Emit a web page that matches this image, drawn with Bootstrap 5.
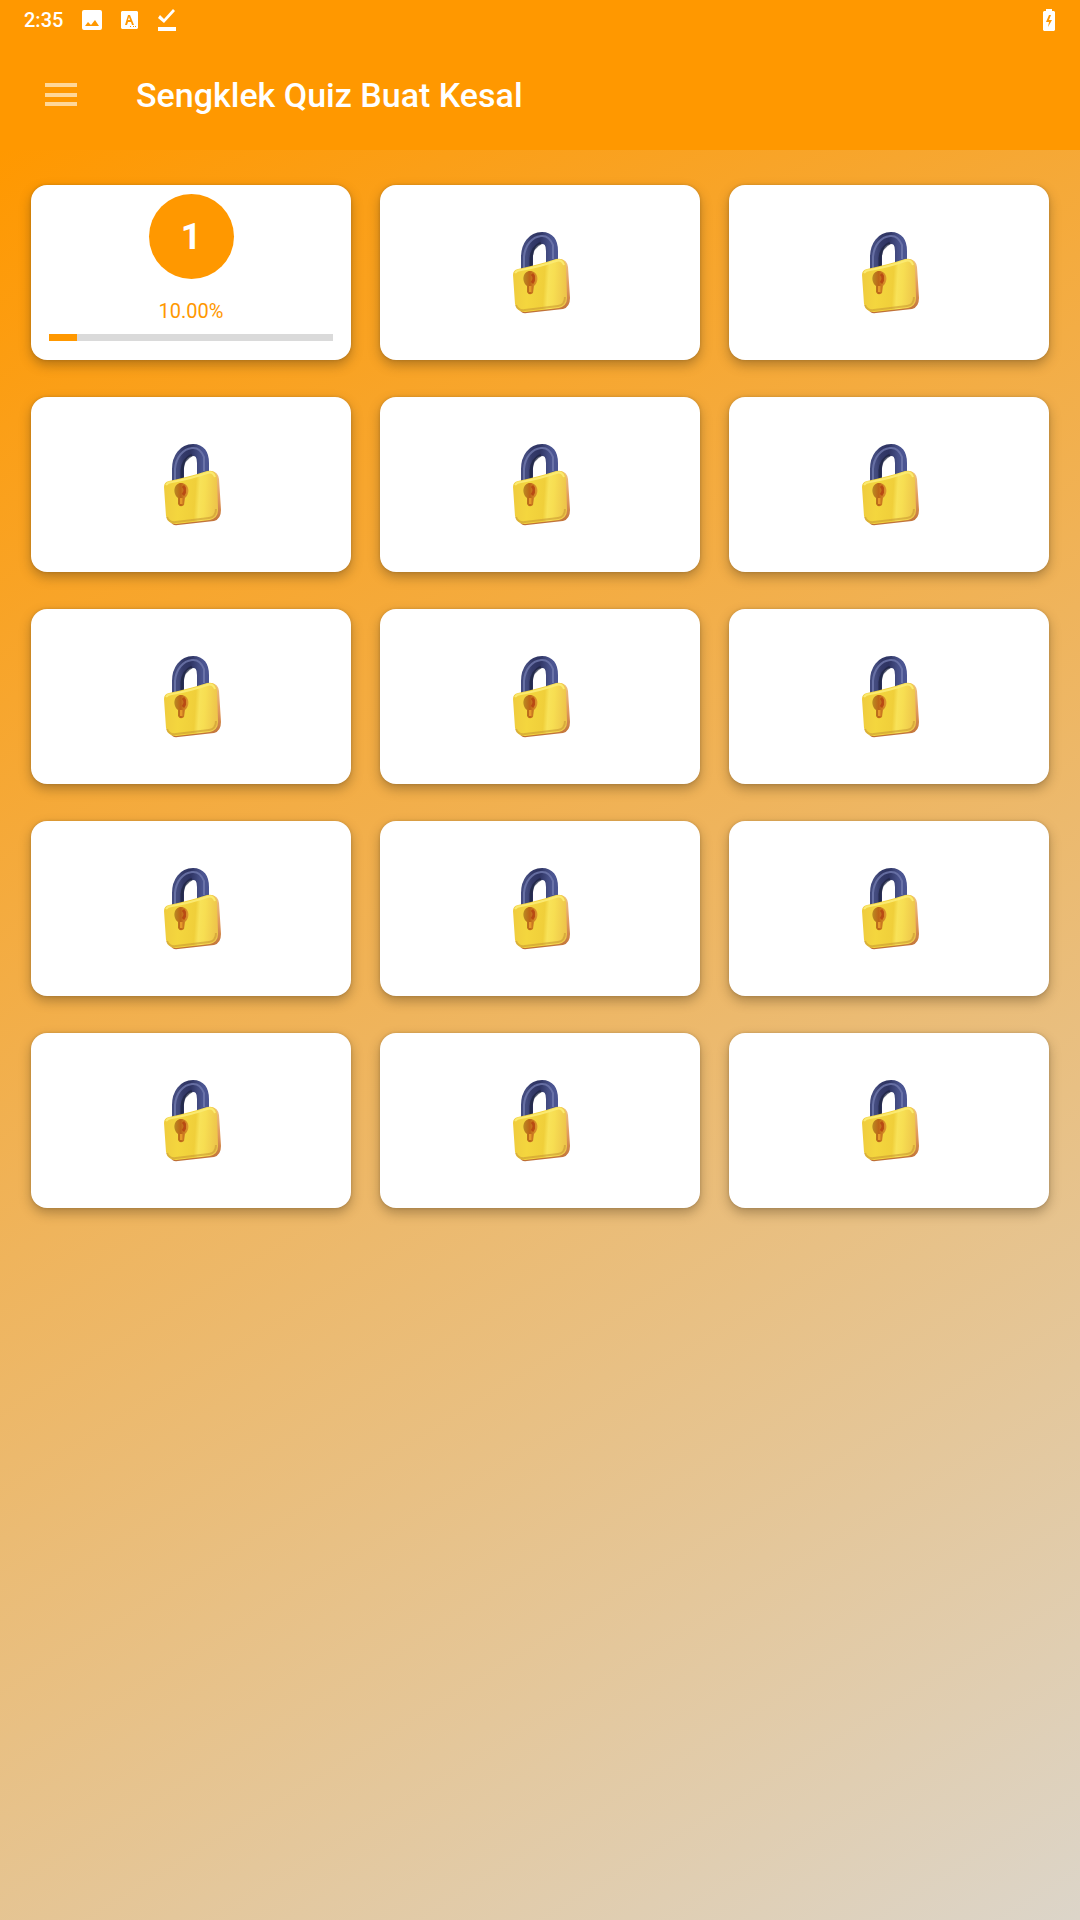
<!DOCTYPE html>
<html lang="id">
<head>
<meta charset="utf-8">
<meta name="viewport" content="width=device-width, initial-scale=1">
<title>Sengklek Quiz Buat Kesal</title>
<link href="https://cdn.jsdelivr.net/npm/bootstrap@5.3.0/dist/css/bootstrap.min.css" rel="stylesheet">
<style>
  :root { --quiz-orange: #ff9800; }
  body { font-family: Roboto, "Liberation Sans", sans-serif; background: var(--quiz-orange); }
  .status-bar { height: 40px; padding: 0 25px 0 24px; font-size: 20px; line-height: 24px; font-weight: 500; }
  .status-bar svg, .menu-btn svg, .lock-art { display: block; }
  .status-icons { margin-left: 19px; gap: 19px; }
  .app-bar { height: 110px; padding: 0 45px; gap: 59px; }
  .app-title { font-size: 34px; line-height: 40px; font-weight: 500; }
  .menu-btn { line-height: 0; }
  .level-area { background: linear-gradient(148.6deg, #ff9800, #dcd5c9); padding: 35px 31px; }
  .level-grid { display: grid; grid-template-columns: repeat(3, minmax(0, 1fr)); column-gap: 29px; row-gap: 37px; }
  .level-card { height: 175px; border-radius: 16px; background: #fff; box-shadow: 0 5px 12px rgba(60, 45, 20, .36), 0 0 3px rgba(60, 45, 20, .2); }
  .level-open { padding: 9px 18px 19px; }
  .level-number { width: 85px; height: 85px; background: var(--quiz-orange); font-size: 36px; line-height: 40px; font-weight: 700; }
  .level-percent { color: var(--quiz-orange); font-size: 20px; line-height: 24px; margin-top: 20px; }
  .level-progress { height: 7px; background: #dadada; border-radius: 0; }
  .level-progress .progress-bar { background: var(--quiz-orange); }
</style>
<script src="https://cdn.jsdelivr.net/npm/bootstrap@5.3.0/dist/js/bootstrap.bundle.min.js" defer></script>
</head>
<body class="min-vh-100 d-flex flex-column">
<svg width="0" height="0" class="position-absolute" aria-hidden="true">
  <defs>
    <linearGradient id="shackleTone" x1="0" x2="1"><stop offset="0" stop-color="#434b7e"/><stop offset=".2" stop-color="#343a69"/><stop offset=".5" stop-color="#2e3463"/><stop offset=".85" stop-color="#454e85"/><stop offset="1" stop-color="#4b5592"/></linearGradient>
    <linearGradient id="faceTone" x1="0" x2="1" y1="0" y2=".06"><stop offset="0" stop-color="#efcb3e"/><stop offset=".3" stop-color="#f4d63e"/><stop offset=".6" stop-color="#f0cf3a"/><stop offset=".68" stop-color="#f8e258"/><stop offset=".78" stop-color="#f7de52"/><stop offset="1" stop-color="#eec64a"/></linearGradient>
    <linearGradient id="sideTone" x1="0" x2="0" y1="0" y2="1"><stop offset="0" stop-color="#eec387"/><stop offset=".5" stop-color="#e2995c"/><stop offset="1" stop-color="#bd6f35"/></linearGradient>
    <linearGradient id="holeTone" x1="0" x2="1"><stop offset="0" stop-color="#b98a22"/><stop offset=".45" stop-color="#bd6417"/><stop offset="1" stop-color="#e09b30"/></linearGradient>
    <filter id="soft" x="-20%" y="-20%" width="140%" height="140%"><feGaussianBlur stdDeviation=".7"/></filter>
    <symbol id="lock" viewBox="-4 0 64 82">
      <path d="M15 38V25C15 14 21 6 30 6Q40 6 40 19V32" fill="none" stroke="url(#shackleTone)" stroke-width="12"/>
      <g filter="url(#soft)" fill="none">
        <path d="M12 36V25C13 13 20 5 29 4Q37 3 41 13V27" stroke="#7079ae" stroke-width="2" opacity=".8"/>
        <path d="M19 36V26Q20 15 29 11" stroke="#20223f" stroke-width="3" opacity=".7"/>
      </g>
      <path d="M9 39L49 27Q55 28 56 35L58 66Q58 75 51 77L15 81Q9 82 7 77Z" fill="url(#sideTone)"/>
      <path d="M6 37Q29 32 44 27Q53 25 54 34L55 66Q55 74 47 76L13 80Q5 80 3 72L1 43Q1 38 6 37Z" fill="url(#faceTone)"/>
      <g filter="url(#soft)" fill="none">
        <path d="M3 41Q5 38 9 38Q30 34 44 29Q50 27 52 33" stroke="#fbea70" stroke-width="2"/>
        <path d="M4 73Q6 79 13 78L46 74Q53 73 53 65" stroke="#c99a32" stroke-width="2" opacity=".6"/>
      </g>
      <path d="M18 39C11 39 9 49 15 54L15 60Q17 64 21 61L22 54C28 49 26 39 18 39Z" fill="url(#holeTone)"/>
      <g filter="url(#soft)" fill="none">
        <path d="M20 42Q24 46 20 51" stroke="#b4400f" stroke-width="3" opacity=".8"/>
        <path d="M18 54V60" stroke="#e69a2a" stroke-width="3"/>
      </g>
    </symbol>
  </defs>
</svg>
<div class="status-bar d-flex align-items-center text-white">
  <span>2:35</span>
  <div class="status-icons d-flex align-items-center">
    <svg width="20" height="20" viewBox="0 0 20 20"><path fill="#fff" fill-rule="evenodd" d="M2 0H18Q20 0 20 2V18Q20 20 18 20H2Q0 20 0 18V2Q0 0 2 0ZM3 16H17L13 10 9 15 6 12Z"/></svg>
    <svg width="17" height="18" viewBox="0 0 17 18"><path fill="#fff" fill-rule="evenodd" d="M1 0H16L17 1V17L16 18H1L0 17V1ZM4 14H6L7 11H10L11 14H13L9 4H7ZM7 9L8 6 9 9ZM9 15V16H10V15ZM12 15V16H13V15ZM14 15V16H15V15Z"/></svg>
    <svg width="20" height="22" viewBox="0 0 20 22"><path fill="#fff" d="M1 18H19V22H1ZM1 9L3 6 7 10 16 0 18 2 7 14Z"/></svg>
  </div>
  <svg class="ms-auto" width="12" height="22" viewBox="0 0 12 22"><path fill="#fff" fill-rule="evenodd" d="M3 0H9V2H11L12 3V21L11 22H1L0 21V3L1 2H3ZM6 6L3 13H6L5 18 9 11H6L8 6Z"/></svg>
</div>
<header class="app-bar d-flex align-items-center text-white">
  <button class="menu-btn btn p-0 border-0" type="button" aria-label="Menu">
    <svg width="32" height="24" viewBox="0 0 32 24"><path fill="#ffd798" d="M0 0H32V4H0ZM0 10H32V14H0ZM0 19H32V23H0Z"/></svg>
  </button>
  <h1 class="app-title m-0">Sengklek Quiz Buat Kesal</h1>
</header>
<main class="level-area flex-grow-1">
  <div class="level-grid" id="levels">
    <button type="button" class="level-card level-open border-0 d-flex flex-column align-items-center">
      <span class="level-number rounded-circle text-white d-flex align-items-center justify-content-center flex-shrink-0">1</span>
      <span class="level-percent">10.00%</span>
      <span class="level-progress progress w-100 mt-auto" role="progressbar" aria-label="Level 1" aria-valuenow="10" aria-valuemin="0" aria-valuemax="100"><span class="progress-bar" style="width:10%"></span></span>
    </button>
  </div>
</main>
<script>
  const levels = document.getElementById('levels');
  for (let n = 2; n <= 15; n++) {
    levels.insertAdjacentHTML('beforeend',
      `<button type="button" class="level-card border-0 p-0 d-flex align-items-center justify-content-center" aria-label="Level ${n}"><svg class="lock-art" width="64" height="82"><use href="#lock"/></svg></button>`);
  }
</script>
</body>
</html>
